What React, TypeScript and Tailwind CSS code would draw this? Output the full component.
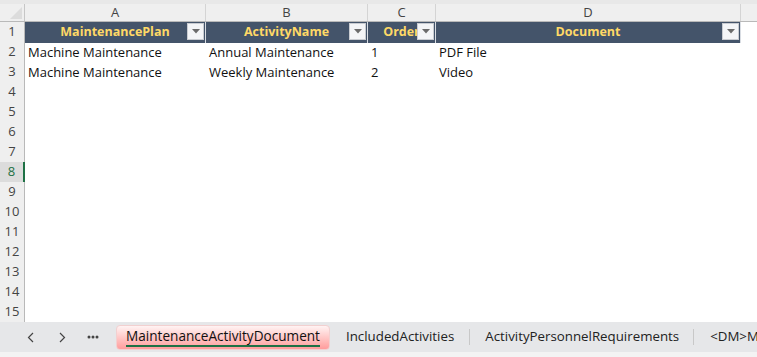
import React from 'react';

const cols = ['A', 'B', 'C', 'D'];
const headers = ['MaintenancePlan', 'ActivityName', 'Order', 'Document'];
const data = [
  ['Machine Maintenance', 'Annual Maintenance', '1', 'PDF File'],
  ['Machine Maintenance', 'Weekly Maintenance', '2', 'Video'],
];
const tabs = ['IncludedActivities', 'ActivityPersonnelRequirements', '<DM>MaintenancePlan'];

const gridCols = 'grid grid-cols-[25px_181px_162px_68px_305px_1fr]';

const FilterButton = () => (
  <div className="absolute right-[1px] top-[1px] w-[17px] h-[17px] bg-[#f4f5f7] border border-[#c9ccd1] flex items-center justify-center">
    <svg width="8" height="5" viewBox="0 0 8 5">
      <path d="M0 0h8L4 4.5z" fill="#6b6b6b" />
    </svg>
  </div>
);

const RowHeader = ({ n, selected }: { n: number; selected?: boolean }) => (
  <div
    className={
      selected
        ? 'flex items-center justify-center border-b border-[#d6d6d6] border-r-2 border-r-[#1e7145] bg-[#dcdcdc] text-[#1e7145]'
        : 'flex items-center justify-center border-b border-[#dadada] border-r border-r-[#b9b9b9] bg-[#efefef] text-[#444]'
    }
  >
    {n}
  </div>
);

export default function App() {
  return (
    <div className="w-[757px] h-[357px] overflow-hidden bg-white flex flex-col font-['Open_Sans',sans-serif] text-[13px] text-[#111]">
      <div className="h-[4px] bg-[#e8e8e8]" />

      {/* column letters */}
      <div className={`${gridCols} h-[18px] bg-[#efefef] border-b border-[#b9b9b9] text-[#444]`}>
        <div className="relative border-r border-[#c6c6c6]">
          <svg className="absolute right-[2px] bottom-[2px]" width="12" height="12" viewBox="0 0 12 12">
            <path d="M12 0v12H0z" fill="#dcdcdc" />
          </svg>
        </div>
        {cols.map((c) => (
          <div key={c} className="flex items-center justify-center border-r border-[#d4d4d4] leading-none">
            {c}
          </div>
        ))}
        <div />
      </div>

      {/* header row */}
      <div className={`${gridCols} h-[20px]`}>
        <RowHeader n={1} />
        {headers.map((h) => (
          <div key={h} className="relative flex items-center justify-center bg-[#44546a] border-r border-[#d9dde3] overflow-hidden">
            <span className="font-bold text-[12.5px] text-[#ffd966] whitespace-nowrap">{h}</span>
            <FilterButton />
          </div>
        ))}
        <div />
      </div>

      {/* data rows */}
      {Array.from({ length: 14 }, (_, i) => {
        const n = i + 2;
        const row = data[i];
        return (
          <div key={n} className={`${gridCols} h-[20px]`}>
            <RowHeader n={n} selected={n === 8} />
            {cols.map((c, j) => (
              <div key={c} className="flex items-center pl-[3px] whitespace-nowrap">
                {row ? row[j] : ''}
              </div>
            ))}
            <div />
          </div>
        );
      })}

      {/* sheet tabs */}
      <div className="h-[30px] bg-[#e6e7e9] flex items-center text-[#222] text-[13.3px] overflow-hidden">
        <div className="w-[116px] flex items-center shrink-0 text-[#333]">
          <div className="w-[14px]" />
          <div className="w-[32px] flex justify-center">
            <svg width="7" height="11" viewBox="0 0 7 11">
              <path d="M6 1L1.5 5.5L6 10" fill="none" stroke="#444" strokeWidth="1.2" />
            </svg>
          </div>
          <div className="w-[32px] flex justify-center">
            <svg width="7" height="11" viewBox="0 0 7 11">
              <path d="M1 1L5.5 5.5L1 10" fill="none" stroke="#444" strokeWidth="1.2" />
            </svg>
          </div>
          <div className="w-[30px] flex justify-center">
            <svg width="12" height="4" viewBox="0 0 12 4">
              <circle cx="2" cy="2" r="1.5" fill="#444" />
              <circle cx="6" cy="2" r="1.5" fill="#444" />
              <circle cx="10" cy="2" r="1.5" fill="#444" />
            </svg>
          </div>
        </div>
        <div className="h-[25px] w-[214px] shrink-0 rounded-[4px] bg-gradient-to-b from-[#fff3f3] to-[#ff9c9c] border border-[#f2d0d0] flex items-center justify-center">
          <span className="border-b-2 border-[#1e7145] leading-[18px] text-[13.6px] text-[#111]">MaintenanceActivityDocument</span>
        </div>
        <div className="pl-4 pr-[15px] whitespace-nowrap">{tabs[0]}</div>
        <div className="w-px h-[16px] shrink-0 bg-[#c8c8c8]" />
        <div className="pl-[15px] pr-[14px] whitespace-nowrap">{tabs[1]}</div>
        <div className="w-px h-[16px] shrink-0 bg-[#c8c8c8]" />
        <div className="pl-4 whitespace-nowrap">{tabs[2]}</div>
      </div>
      <div className="flex-1 bg-[#f3f3f3]" />
    </div>
  );
}
